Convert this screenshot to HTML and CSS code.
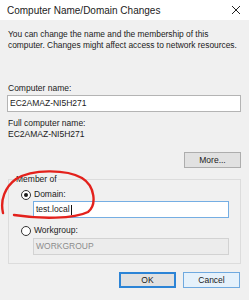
FILE: index.html
```html
<!DOCTYPE html>
<html lang="en">
<head>
    <meta charset="UTF-8">
    <title>Computer Name/Domain Changes</title>
    <link rel="stylesheet" href="styles.css">
</head>
<body>
    <div class="dialog">
        <div class="titlebar">
            <span class="title">Computer Name/Domain Changes</span>
            <svg class="close" width="10" height="10" viewBox="0 0 10 10">
                <path d="M1 1 L9 9 M9 1 L1 9" stroke="#222" stroke-width="1" fill="none"/>
            </svg>
        </div>

        <div class="content">
            <p class="desc">You can change the name and the membership of this<br>computer. Changes might affect access to network resources.</p>

            <div class="label label-first">Computer name:</div>
            <div class="textbox">EC2AMAZ-NI5H271</div>

            <div class="label label-full">Full computer name:</div>
            <div class="label">EC2AMAZ-NI5H271</div>

            <div class="more-row">
                <button class="btn">More...</button>
            </div>

            <fieldset class="group">
                <legend>Member of</legend>
                <div class="radio-row">
                    <span class="radio checked"></span>
                    <span>Domain:</span>
                </div>
                <div class="textbox indent focused">test.local<span class="caret"></span></div>
                <div class="radio-row radio-second">
                    <span class="radio"></span>
                    <span>Workgroup:</span>
                </div>
                <div class="textbox indent disabled">WORKGROUP</div>
            </fieldset>

            <div class="actions">
                <button class="btn btn-default">OK</button>
                <button class="btn btn-hover">Cancel</button>
            </div>
        </div>

        <!-- hand-drawn annotation around the domain option -->
        <svg class="scribble" width="249" height="300" viewBox="0 0 249 300">
            <path d="M14 215 C40 219, 74 219, 88 212 C97 205, 95 186, 82 178 C66 169, 32 169, 16 179 C5 187, 0 200, 3 213"
                  stroke="#e3211c" stroke-width="2.4" fill="none" stroke-linecap="round"/>
        </svg>
    </div>
</body>
</html>
```

FILE: styles.css
```css
body {
    margin: 0;
    font-family: 'Liberation Sans', Arial, sans-serif;
    color: #1a1a1a;
    background: #f0f0f0;
}

.dialog {
    position: relative;
    width: 249px;
    height: 300px;
    background: #f0f0f0;
    overflow: hidden;
}

.titlebar {
    height: 20px;
    background: #fff;
    display: flex;
    justify-content: space-between;
    align-items: center;
    padding: 0 8px 0 7px;
}

.title {
    font-size: 10px;
    color: #222;
}

.content {
    padding: 0 8px 0 7px;
    font-size: 8.5px;
    line-height: 11px;
}

.desc {
    margin: 9px 0 0 1px;
    font-size: 8.4px;
    white-space: nowrap;
}

.label {
    margin-left: 1px;
}

.label-first {
    margin-top: 32px;
    margin-bottom: 1px;
}

.label-full {
    margin-top: 6px;
}

.textbox {
    height: 15px;
    border: 1px solid #b4b4b4;
    background: #fff;
    padding-left: 2px;
    line-height: 15px;
    display: flex;
    align-items: center;
}

.textbox.indent {
    margin-left: 24px;
    margin-right: 11px;
}

.textbox.focused {
    border-color: #75aee3;
}

.textbox.disabled {
    background: #ececec;
    border-color: #d2d2d2;
    color: #8c8c8c;
}

.caret {
    display: inline-block;
    width: 1px;
    height: 10px;
    background: #111;
    margin-left: 1px;
}

.more-row {
    display: flex;
    justify-content: flex-end;
    margin-top: 12px;
}

.btn {
    font-family: inherit;
    font-size: 8.5px;
    color: #1a1a1a;
    height: 16px;
    width: 57px;
    padding: 0;
    background: #e1e1e1;
    border: 1px solid #adadad;
}

.btn-default {
    border: 2px solid #2c84d6;
}

.btn-hover {
    background: #e5f1fb;
    border-color: #6fa9df;
}

.group {
    margin: 6px 0 0 1px;
    padding: 0 0 8px 0;
    border: 1px solid #dcdcdc;
}

.group legend {
    padding: 0 1px;
    margin-left: 6px;
}

.radio-row {
    display: flex;
    align-items: center;
    gap: 3px;
    margin: 4px 0 1px 12px;
}

.radio-second {
    margin-top: 7px;
    margin-bottom: 2px;
}

.radio {
    width: 8px;
    height: 8px;
    border: 1px solid #333;
    border-radius: 50%;
    background: #fff;
    position: relative;
}

.radio.checked::after {
    content: "";
    position: absolute;
    left: 2px;
    top: 2px;
    width: 4px;
    height: 4px;
    border-radius: 50%;
    background: #1a1a1a;
}

.actions {
    display: flex;
    justify-content: flex-end;
    gap: 7px;
    margin-top: 8px;
    padding-right: 1px;
}

.scribble {
    position: absolute;
    left: 0;
    top: 0;
    pointer-events: none;
}
```
